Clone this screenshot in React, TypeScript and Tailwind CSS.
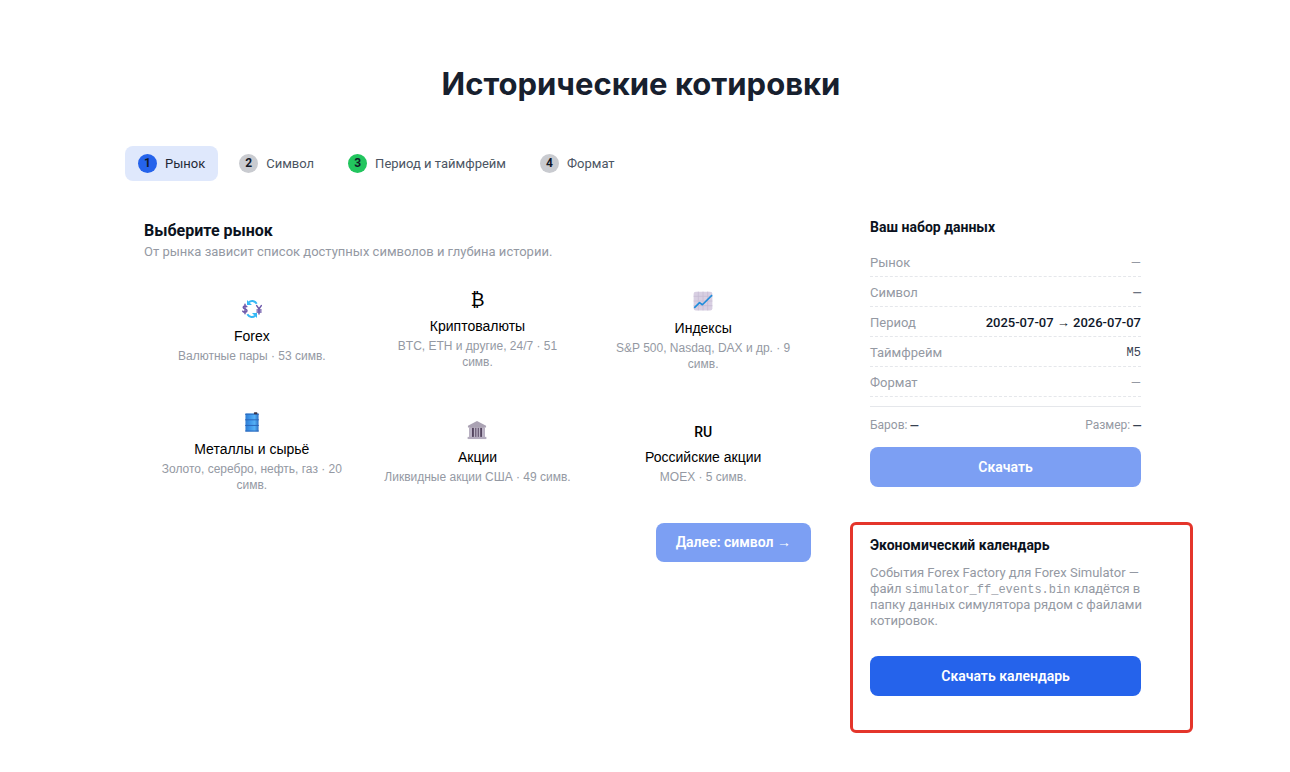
import type { ReactNode } from "react";
import clsx from "clsx";

type Step = { n: number; label: string; state: "active" | "idle" | "done" };
type Market = { title: string; note: string; icon: ReactNode; compact?: boolean };

const steps: Step[] = [
  { n: 1, label: "Рынок", state: "active" },
  { n: 2, label: "Символ", state: "idle" },
  { n: 3, label: "Период и таймфрейм", state: "done" },
  { n: 4, label: "Формат", state: "idle" },
];

function ExchangeIcon() {
  return (
    <svg viewBox="0 0 32 32" className="size-5" aria-hidden="true">
      <g fill="none" stroke="#35b8f5" strokeWidth="3.2">
        <path d="M11 5.500C14 2 20 2 23.500 7.500" />
        <path d="M21 26.500C18 30 12 30 8.500 24.500" />
      </g>
      <path d="M8 1.500v8h8zM24 30.500v-8h-8z" fill="#35b8f5" />
      <g fill="none" stroke="#6f5bab" strokeWidth="2.4" strokeLinecap="round">
        <path d="M7.600 12.300C6.200 10.200 1.800 10.800 2 13.500c.2 3 6 2 6 5.200 0 3-5 3.500-6.700.9M4.800 8.500v15" />
        <path d="M23.500 10.500l3.700 5.500 3.700-5.500M27.200 16v8M24 17.500h6.500M24 20.700h6.500" />
      </g>
    </svg>
  );
}

function ChartIcon() {
  return (
    <svg viewBox="0 0 32 32" className="size-5" aria-hidden="true">
      <rect x="1" y="1" width="30" height="30" rx="3.500" fill="#d8cfe2" />
      <path d="M8.500 1v30M16 1v30M23.500 1v30M1 8.500h30M1 16h30M1 23.500h30" stroke="#c6bbd2" strokeWidth="1.200" />
      <path d="M2 27l8.500-8.500 4.500 3.500L30.500 6.500" fill="none" stroke="#1f8ddb" strokeWidth="2.600" strokeLinejoin="round" />
    </svg>
  );
}

function BarrelIcon() {
  return (
    <svg viewBox="0 0 32 32" className="size-5" aria-hidden="true">
      <defs>
        <linearGradient id="barrel" x1="0" x2="1">
          <stop offset="0" stopColor="#2f7dd3" />
          <stop offset="0.350" stopColor="#3f97ea" />
          <stop offset="0.700" stopColor="#55b0f5" />
          <stop offset="1" stopColor="#2c6fc4" />
        </linearGradient>
      </defs>
      <rect x="5.500" y="2.500" width="21" height="28.500" rx="1" fill="url(#barrel)" />
      <path d="M5 3.500h22M5 12.500h22M5 21.500h22M5 30.500h22" stroke="#2a63b8" strokeWidth="1.500" />
      <rect x="19" y="0.500" width="5.500" height="3" rx="1" fill="#3b3345" />
    </svg>
  );
}

function BankIcon() {
  return (
    <svg viewBox="0 0 32 32" className="size-5" aria-hidden="true">
      <path d="M4 12h24v16H4z" fill="#54455f" />
      <path d="M16 1.500L30.500 9v3h-29V9z" fill="#aaa2b3" />
      <path d="M3.500 12h4.500v15H3.500zM11 12h2.300v15H11zM14.900 12h2.300v15h-2.300zM18.800 12h2.300v15h-2.300zM24 12h4.500v15H24z" fill="#bcb4c6" />
      <path d="M1 27h30v3.500H1z" fill="#b4acbe" />
    </svg>
  );
}

const markets: Market[] = [
  { title: "Forex", note: "Валютные пары · 53 симв.", icon: <ExchangeIcon /> },
  {
    title: "Криптовалюты",
    note: "BTC, ETH и другие, 24/7 · 51 симв.",
    icon: <span className="pb-px font-['Roboto',sans-serif] text-[19px] font-medium leading-none">₿</span>,
    compact: true,
  },
  { title: "Индексы", note: "S&P 500, Nasdaq, DAX и др. · 9 симв.", icon: <ChartIcon /> },
  { title: "Металлы и сырьё", note: "Золото, серебро, нефть, газ · 20 симв.", icon: <BarrelIcon /> },
  { title: "Акции", note: "Ликвидные акции США · 49 симв.", icon: <BankIcon /> },
  {
    title: "Российские акции",
    note: "MOEX · 5 симв.",
    icon: <span className="pt-1.5 font-['Roboto',sans-serif] text-[14px] font-medium">RU</span>,
  },
];

const summary: { label: string; value: string; style: string }[] = [
  { label: "Рынок", value: "—", style: "text-[#9499a3]" },
  { label: "Символ", value: "—", style: "font-['Liberation_Mono',monospace] font-bold text-[#6b7280]" },
  { label: "Период", value: "2025-07-07 → 2026-07-07", style: "font-medium text-[#0f172a]" },
  { label: "Таймфрейм", value: "M5", style: "font-['Liberation_Mono',monospace] text-[12px] text-[#374151]" },
  { label: "Формат", value: "—", style: "text-[#9499a3]" },
];

function StepTab({ step }: { step: Step }) {
  const active = step.state === "active";
  return (
    <button
      type="button"
      aria-current={active ? "step" : undefined}
      className={clsx(
        "flex items-center gap-2 rounded-lg px-[13px] py-2 text-[13px] leading-[19px]",
        active ? "bg-[#dfe8fc] text-[#1f2937]" : "text-[#4b5563]",
      )}
    >
      <span
        className={clsx(
          "grid size-[19px] place-items-center rounded-full text-[12px] font-bold text-[#111827]",
          active && "bg-[#2563eb]",
          step.state === "idle" && "bg-[#c9cbd0]",
          step.state === "done" && "bg-[#22c55e]",
        )}
      >
        {step.n}
      </span>
      {step.label}
    </button>
  );
}

function MarketCard({ market }: { market: Market }) {
  return (
    <button
      type="button"
      className="flex min-h-[111px] flex-col items-center justify-center px-3 text-center font-['Liberation_Sans',sans-serif]"
    >
      <span className={clsx("flex justify-center text-black", market.compact ? "h-[18px] items-end" : "h-[22px] items-center")}>
        {market.icon}
      </span>
      <span className="mt-[7px] text-[14px] leading-[19px] text-black">{market.title}</span>
      <span className="mt-[2px] text-[12px] leading-4 text-[#9499a3]">{market.note}</span>
    </button>
  );
}

export default function App() {
  return (
    <main className="min-h-screen bg-white px-4 pb-10 pt-16 font-['Roboto',sans-serif] text-[#0b1220] lg:pr-6">
      <div className="mx-auto max-w-[1032px]">
        <h1 className="text-center font-['Inter',sans-serif] text-[31px] font-bold leading-[40px] text-[#17202e]">
          Исторические котировки
        </h1>

        <nav aria-label="Шаги" className="mt-[42px] flex flex-wrap gap-2">
          {steps.map((s) => (
            <StepTab key={s.n} step={s} />
          ))}
        </nav>

        <div className="mt-9 flex flex-col gap-10 lg:flex-row lg:items-start">
          <section className="min-w-0 flex-1 pl-[19px]">
            <h2 className="mt-[3px] text-[16px] font-bold leading-[22px]">Выберите рынок</h2>
            <p className="text-[13px] leading-5 text-[#9499a3]">
              От рынка зависит список доступных символов и глубина истории.
            </p>
            <div className="mt-[13px] grid grid-cols-1 gap-[10px] sm:grid-cols-3">
              {markets.map((m) => (
                <MarketCard key={m.title} market={m} />
              ))}
            </div>
            <div className="mt-4 flex justify-end">
              <button
                type="button"
                disabled
                className="rounded-lg bg-[#7c9ff3] px-5 py-[9px] text-[14px] font-semibold leading-[21px] text-white"
              >
                Далее: символ →
              </button>
            </div>
          </section>

          <aside className="w-full px-[19px] lg:w-[306px] lg:pr-4 lg:pl-[19px]">
            <section>
              <h2 className="text-[14px] font-bold leading-5">Ваш набор данных</h2>
              <dl className="mt-[10px] text-[13px]">
                {summary.map((row) => (
                  <div
                    key={row.label}
                    className="flex h-[30px] items-center justify-between border-b border-dashed border-[#e5e7eb] pt-0.5"
                  >
                    <dt className="text-[#9499a3]">{row.label}</dt>
                    <dd className={row.style}>{row.value}</dd>
                  </div>
                ))}
              </dl>
              <div className="mt-[9px] flex justify-between border-t border-[#e5e7eb] pt-2 text-[12px] leading-5 text-[#9499a3]">
                <span>
                  Баров: <b className="font-['Liberation_Mono',monospace] text-[13px] text-[#374151]">—</b>
                </span>
                <span>
                  Размер: <b className="font-['Liberation_Mono',monospace] text-[13px] text-[#374151]">—</b>
                </span>
              </div>
              <button
                type="button"
                disabled
                className="mt-[11px] h-10 w-full rounded-lg bg-[#7c9ff3] text-[14px] font-semibold text-white"
              >
                Скачать
              </button>
            </section>

            <section className="relative mt-12">
              <div className="pointer-events-none absolute -top-[13px] -bottom-[37px] -left-[20px] -right-[52px] rounded-md border-3 border-[#e4352b]" />
              <h2 className="text-[14px] font-bold leading-5">Экономический календарь</h2>
              <p className="-mr-1 mt-[10px] text-[13px] leading-4 text-[#9499a3]">
                События Forex Factory для Forex Simulator — файл{" "}
                <code className="font-['Liberation_Mono',monospace] text-[12px] leading-none">simulator_ff_events.bin</code>{" "}
                кладётся в папку данных симулятора рядом с файлами котировок.
              </p>
              <button
                type="button"
                className="mt-[27px] h-10 w-full rounded-lg bg-[#2563eb] text-[14px] font-semibold text-white"
              >
                Скачать календарь
              </button>
            </section>
          </aside>
        </div>
      </div>
    </main>
  );
}
